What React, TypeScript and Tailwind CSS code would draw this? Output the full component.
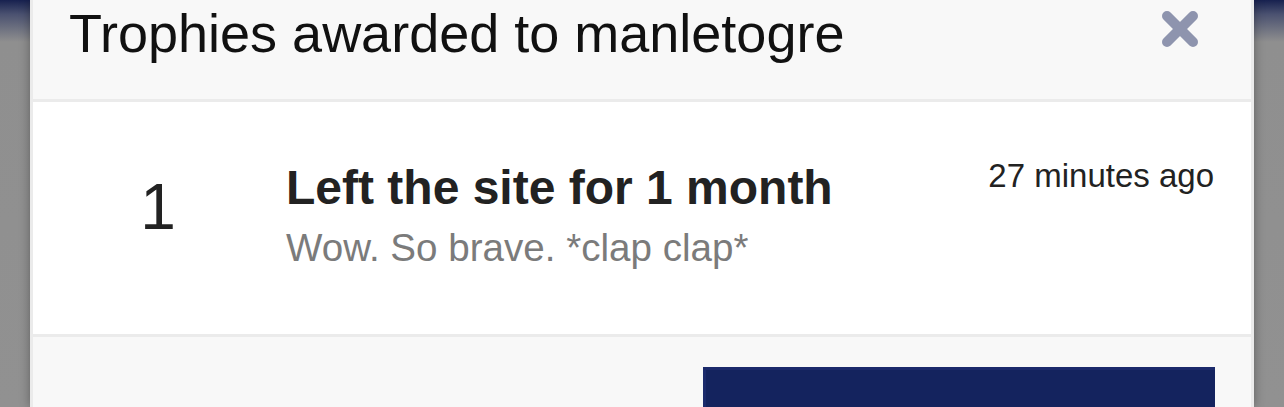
type Trophy = {
  rank: number;
  title: string;
  description: string;
  awardedAgo: string;
};

const trophies: Trophy[] = [
  { rank: 1, title: 'Left the site for 1 month', description: 'Wow. So brave. *clap clap*', awardedAgo: '27 minutes ago' },
];

const font = "font-['Liberation_Sans','Helvetica',Arial,sans-serif]";

// heavy rounded cross for the close button
function CloseIcon() {
  return (
    <svg width="36" height="36" viewBox="0 0 36 36" aria-hidden="true">
      <g stroke="#8e94ae" strokeWidth="10" strokeLinecap="round">
        <line x1="5" y1="5" x2="31" y2="31" />
        <line x1="31" y1="5" x2="5" y2="31" />
      </g>
    </svg>
  );
}

function TrophyRow({ trophy }: { trophy: Trophy }) {
  return (
    <div className="flex items-start h-[235px] shrink-0 bg-white border-b-[3px] border-[#ebebeb]">
      <div className="w-[250px] shrink-0 flex justify-center pt-[73px]">
        <span className="text-[64px] leading-none text-[#222]">{trophy.rank}</span>
      </div>
      <div className="flex-1 pt-[62px] pl-[3px]">
        <div className="text-[48px] leading-none font-bold text-[#222]">{trophy.title}</div>
        <div className="mt-[17px] text-[38.6px] leading-none text-[#7b7b7b]">{trophy.description}</div>
      </div>
      <div className="pt-[57px] pr-[37px]">
        <span className="text-[33px] leading-none text-[#222]">{trophy.awardedAgo}</span>
      </div>
    </div>
  );
}

export default function App() {
  return (
    <div className={`h-[407px] w-full overflow-hidden bg-[linear-gradient(to_bottom,#17214f_0px,#4a5170_14px,#8f8f8f_42px,#919191_100%)] px-[30px] ${font}`}>
      <div className="h-full overflow-hidden border-x-[3px] border-[#ebebeb] bg-[#f8f8f8] shadow-[0_0_10px_rgba(0,0,0,0.35)] flex flex-col">
        <div className="h-[102px] shrink-0 flex items-start justify-between border-b-[3px] border-[#ebebeb] pl-[36px] pr-[53px]">
          <h3 className="pt-[6px] text-[54px] leading-none text-[#111] font-normal">Trophies awarded to manletogre</h3>
          <button type="button" className="mt-[11px] ml-4" aria-label="Close">
            <CloseIcon />
          </button>
        </div>

        {trophies.map(t => <TrophyRow key={t.rank} trophy={t} />)}

        <div className="shrink-0 flex justify-end pt-[30px] pr-[36px]">
          <button type="button" className="w-[512px] h-[60px] shrink-0 bg-[#14235e] border-[3px] border-[#1b2a6b] border-b-0 border-r-0" />
        </div>
      </div>
    </div>
  );
}
